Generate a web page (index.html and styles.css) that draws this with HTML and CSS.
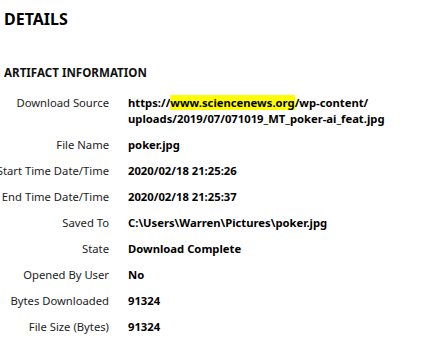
FILE: index.html
```html
<!DOCTYPE html>
<html lang="en">
<head>
    <meta charset="UTF-8">
    <title>Details</title>
    <link rel="stylesheet" href="styles.css">
</head>
<body>
    <div class="panel">
        <h1>DETAILS</h1>

        <h2>ARTIFACT INFORMATION</h2>

        <div class="props">
            <div class="prop">
                <div class="label"><span>Download Source</span></div>
                <div class="value">https://<span class="hit">www.sciencenews.org</span>/wp-content/<br>uploads/2019/07/071019_MT_poker-ai_feat.jpg</div>
            </div>
            <div class="prop">
                <div class="label"><span>File Name</span></div>
                <div class="value">poker.jpg</div>
            </div>
            <div class="prop">
                <div class="label"><span>Start Time Date/Time</span></div>
                <div class="value">2020/02/18 21:25:26</div>
            </div>
            <div class="prop">
                <div class="label"><span>End Time Date/Time</span></div>
                <div class="value">2020/02/18 21:25:37</div>
            </div>
            <div class="prop">
                <div class="label"><span>Saved To</span></div>
                <div class="value">C:\Users\Warren\Pictures\poker.jpg</div>
            </div>
            <div class="prop">
                <div class="label"><span>State</span></div>
                <div class="value">Download Complete</div>
            </div>
            <div class="prop">
                <div class="label"><span>Opened By User</span></div>
                <div class="value">No</div>
            </div>
            <div class="prop">
                <div class="label"><span>Bytes Downloaded</span></div>
                <div class="value">91324</div>
            </div>
            <div class="prop">
                <div class="label"><span>File Size (Bytes)</span></div>
                <div class="value">91324</div>
            </div>
        </div>
    </div>
</body>
</html>
```

FILE: styles.css
```css
* {
    margin: 0;
    padding: 0;
    box-sizing: border-box;
}

body {
    font-family: 'Noto Sans', 'Open Sans', sans-serif;
    background: #fff;
    color: #000;
    overflow: hidden;
}

.panel {
    padding: 9px 0 0 4px;
}

h1 {
    font-size: 16px;
    font-weight: bold;
    line-height: 20px;
    color: #000;
}

h2 {
    margin-top: 36px;
    font-size: 11.6px;
    font-weight: bold;
    line-height: 16px;
    color: #111;
}

.props {
    margin-top: 14px;
    display: flex;
    flex-direction: column;
    gap: 10px;
}

.prop {
    display: grid;
    grid-template-columns: 105px auto;
    column-gap: 19px;
    font-size: 11.25px;
    line-height: 16px;
}

/* long labels spill off to the left, like the native panel */
.label {
    display: flex;
    justify-content: flex-end;
    white-space: nowrap;
    color: #222;
}

.value {
    font-weight: bold;
    color: #000;
}

.hit {
    background: #ffff00;
}
```
